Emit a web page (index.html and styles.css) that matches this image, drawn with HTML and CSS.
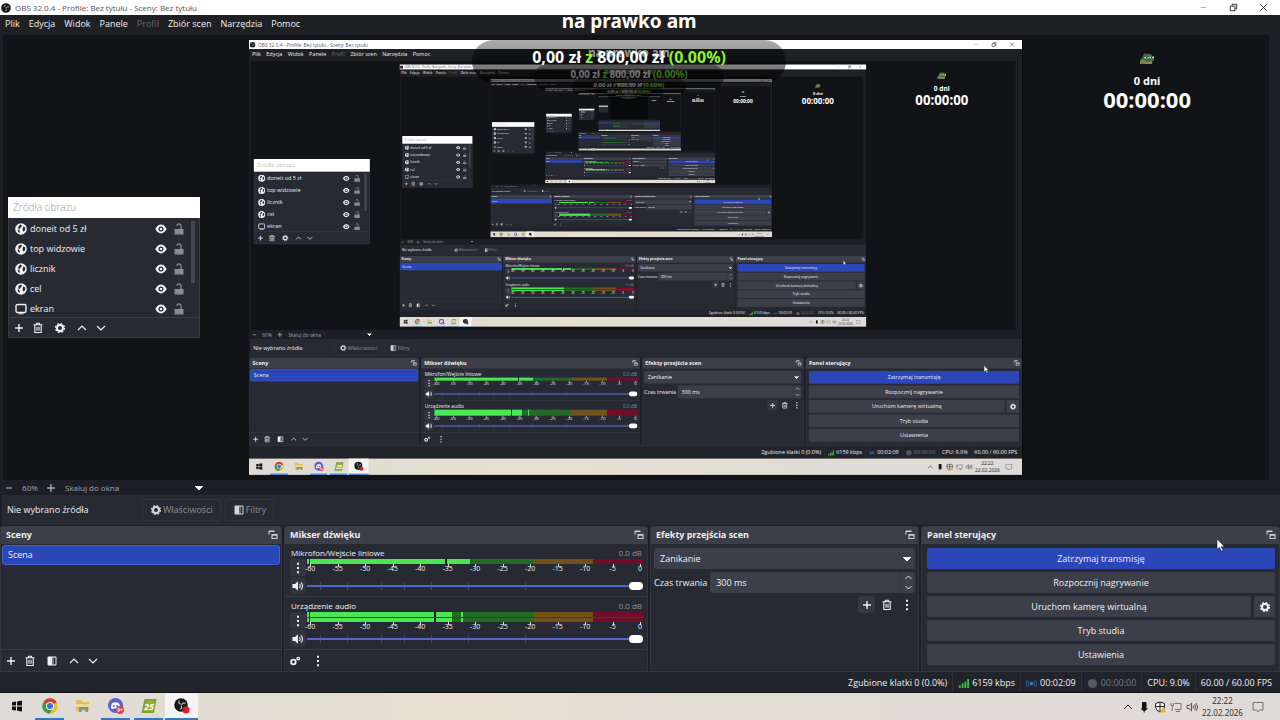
FILE: index.html
```html
<!DOCTYPE html>
<html lang="pl">
<head>
<meta charset="utf-8">
<meta name="viewport" content="width=device-width, initial-scale=1">
<title>OBS 32.0.4 - Profile: Bez tytułu - Sceny: Bez tytułu</title>
<link rel="stylesheet" href="styles.css">
</head>
<body>
<svg class="sprite" aria-hidden="true">
  <symbol id="plus" viewBox="0 0 12 12"><path d="M6 2v8M2 6h8" stroke="currentColor" stroke-width="1.4" fill="none"/></symbol>
  <symbol id="minus" viewBox="0 0 12 12"><path d="M3 6h6" stroke="currentColor" stroke-width="1.2"/></symbol>
  <symbol id="trash" viewBox="0 0 12 12"><path d="M1.5 2.8h9M4.5 2.5V1.2h3v1.3M2.8 3v7.5h6.4V3M5 4.8v4M7 4.8v4" stroke="currentColor" stroke-width="1.1" fill="none"/></symbol>
  <symbol id="filter" viewBox="0 0 12 12"><path d="M2 2h8v8H2z" fill="none" stroke="currentColor" stroke-width="1"/><path d="M2 2h4v8H2z" fill="currentColor"/><path d="M6 2h2v8H6z" fill="currentColor" opacity=".4"/></symbol>
  <symbol id="up" viewBox="0 0 12 12"><path d="M2 8l4-4 4 4" stroke="currentColor" stroke-width="1.2" fill="none"/></symbol>
  <symbol id="down" viewBox="0 0 12 12"><path d="M2 4l4 4 4-4" stroke="currentColor" stroke-width="1.2" fill="none"/></symbol>
  <symbol id="gear" viewBox="0 0 12 12"><circle cx="6" cy="6" r="3" fill="none" stroke="currentColor" stroke-width="2"/><circle cx="6" cy="6" r="4.4" fill="none" stroke="currentColor" stroke-width="1.4" stroke-dasharray="1.9 1.55"/></symbol>
  <symbol id="gears" viewBox="0 0 12 12"><circle cx="4.4" cy="7" r="2.3" fill="none" stroke="currentColor" stroke-width="1.8"/><circle cx="9.2" cy="3.6" r="1.3" fill="none" stroke="currentColor" stroke-width="1.3"/></symbol>
  <symbol id="dots" viewBox="0 0 12 12"><path d="M5 .8h2v2H5zM5 5h2v2H5zM5 9.2h2v2H5z" fill="currentColor"/></symbol>
  <symbol id="speaker" viewBox="0 0 12 12"><path d="M.5 4H3l3-2.8v9.6L3 8H.5z" fill="currentColor"/><path d="M7.5 4q1.3 2 0 4M9 2.3q3 3.7 0 7.4" fill="none" stroke="currentColor" stroke-width="1.1"/></symbol>
  <symbol id="eye" viewBox="0 0 12 12"><path d="M.3 6Q2.800 1.600 6 1.600T11.700 6Q9.200 10.400 6 10.400T.3 6z" fill="currentColor"/><circle cx="6" cy="6" r="2.500" fill="#272a33"/><circle cx="6" cy="6" r="1.300" fill="currentColor"/></symbol>
  <symbol id="lock" viewBox="0 0 12 12"><path d="M1.500 6h9v5.500h-9z" fill="currentColor"/><path d="M4.200 3V2.400Q4.200 1 6 1t2 1.800V6" fill="none" stroke="currentColor" stroke-width="1.300"/></symbol>
  <symbol id="globe" viewBox="0 0 12 12"><circle cx="6" cy="6" r="5.800" fill="currentColor"/><path d="M5.200 1.600l1.600.6-.3 1.700-1.300.8-.5 1.500-1.500-.8.300-1.800zM8.200 3.600l2.100 1-.3 2.600-1.700 1.500-.8-2.300zM2.600 6.200l2 1 .2 2.700-1.500-1z" fill="#272a33"/></symbol>
  <symbol id="monitor" viewBox="0 0 12 12"><rect x="1" y="1.500" width="10" height="8" rx="1.500" fill="none" stroke="currentColor" stroke-width="1.400"/><path d="M3.500 10.800h5" stroke="currentColor"/></symbol>
  <symbol id="float" viewBox="0 0 12 12"><path d="M2 5.500V2.500h5.500M2 2h5.500M5 5.500h5v4H5zM5 6.300h5" fill="none" stroke="currentColor" stroke-width="1.100"/></symbol>
  <symbol id="obs" viewBox="0 0 12 12"><circle cx="6" cy="6" r="5.800" fill="#17181b"/><path d="M4.600 2.200Q3.400 4.600 5.600 5.400M9.800 4.600Q7.200 3.700 6.600 5.900M5.300 9.700Q7.600 8.300 5.900 6.500" fill="none" stroke="#d8d8d8" stroke-width=".9"/></symbol>
  <symbol id="frog" viewBox="0 0 16 12"><path d="M1 7L3 5q0-2 2-3l3-1q3-.6 5 1.200l2 1.800v3L13 9v2H1z" fill="#3f6b3d"/><path d="M4 2l2-2 1 1-2 2z" fill="#6d5a40"/><path d="M5.500 4h4v1.500h-4zM10.500 3.800H15v1.500h-4.500z" fill="#dfeee0"/><path d="M7 4h1.300v1.500H7zM12 3.800h1.300v1.500H12z" fill="#17301b"/><path d="M1 8.500l3-2 4 2.300 5-.8v3H1z" fill="#7e8f4e"/><path d="M2 9h4v2H2z" fill="#8d6849"/></symbol>
</svg>

<div class="screen">
  <header class="titlebar">
    <svg class="icon"><use href="#obs"/></svg>
    <span class="caption">OBS 32.0.4 - Profile: Bez tytułu - Sceny: Bez tytułu</span>
    <div class="window-buttons">
      <button type="button" aria-label="Minimalizuj"><svg viewBox="0 0 12 12"><path d="M3 6h6" stroke="#aaa"/></svg></button>
      <button type="button" aria-label="Przywróć"><svg viewBox="0 0 12 12"><path d="M2.500 4.500h5v5h-5zM4.500 4V2.500h5v5H8" fill="none" stroke="#222"/></svg></button>
      <button type="button" aria-label="Zamknij"><svg viewBox="0 0 12 12"><path d="M2.500 2.500l7 7M9.500 2.500l-7 7" stroke="#222" stroke-width=".9"/></svg></button>
    </div>
  </header>
  <nav class="menu">
    <button type="button">Plik</button><button type="button">Edycja</button><button type="button">Widok</button><button type="button">Panele</button><button type="button" disabled>Profil</button><button type="button">Zbiór scen</button><button type="button">Narzędzia</button><button type="button">Pomoc</button>
  </nav>

  <main class="preview"><div class="canvas"></div></main>

  <div class="zoombar">
    <button type="button" aria-label="Pomniejsz"><svg class="icon"><use href="#minus"/></svg></button>
    <span class="zoom-value">60%</span>
    <button type="button" aria-label="Powiększ"><svg class="icon"><use href="#plus"/></svg></button>
    <select class="zoom-mode" aria-label="Skalowanie podglądu"><option>Skaluj do okna</option></select>
  </div>

  <div class="context">
    <span class="context-name">Nie wybrano źródła</span>
    <button type="button" disabled><svg class="icon"><use href="#gear"/></svg>Właściwości</button>
    <button type="button" disabled><svg class="icon"><use href="#filter"/></svg>Filtry</button>
  </div>

  <div class="docks">
    <section class="dock">
      <h2>Sceny<svg class="icon"><use href="#float"/></svg></h2>
      <div class="scene-list"><button type="button" class="scene">Scena</button></div>
      <div class="tools">
        <button type="button" aria-label="Dodaj scenę"><svg class="icon"><use href="#plus"/></svg></button>
        <button type="button" aria-label="Usuń scenę"><svg class="icon"><use href="#trash"/></svg></button>
        <button type="button" class="spaced" aria-label="Filtry sceny"><svg class="icon"><use href="#filter"/></svg></button>
        <button type="button" class="spaced" aria-label="W górę"><svg class="icon"><use href="#up"/></svg></button>
        <button type="button" aria-label="W dół"><svg class="icon"><use href="#down"/></svg></button>
      </div>
    </section>

    <section class="dock">
      <h2>Mikser dźwięku<svg class="icon"><use href="#float"/></svg></h2>
      <div class="channel">
        <div class="channel-head"><span>Mikrofon/Wejście liniowe</span><span class="level">0.0 dB</span></div>
        <button type="button" aria-label="Opcje mikrofonu"><svg class="icon"><use href="#dots"/></svg></button>
        <div class="meter">
          <div class="bar mic"></div>
          <div class="scale"><span>-60</span><span>-55</span><span>-50</span><span>-45</span><span>-40</span><span>-35</span><span>-30</span><span>-25</span><span>-20</span><span>-15</span><span>-10</span><span>-5</span><span>0</span></div>
        </div>
        <button type="button" aria-label="Wycisz mikrofon"><svg class="icon"><use href="#speaker"/></svg></button>
        <input type="range" value="100" aria-label="Głośność mikrofonu">
      </div>
      <div class="channel">
        <div class="channel-head"><span>Urządzenie audio</span><span class="level">0.0 dB</span></div>
        <button type="button" aria-label="Opcje urządzenia"><svg class="icon"><use href="#dots"/></svg></button>
        <div class="meter">
          <div class="bar desktop"></div>
          <div class="scale"><span>-60</span><span>-55</span><span>-50</span><span>-45</span><span>-40</span><span>-35</span><span>-30</span><span>-25</span><span>-20</span><span>-15</span><span>-10</span><span>-5</span><span>0</span></div>
        </div>
        <button type="button" aria-label="Wycisz urządzenie"><svg class="icon"><use href="#speaker"/></svg></button>
        <input type="range" value="100" aria-label="Głośność urządzenia">
      </div>
      <div class="tools mixer-tools">
        <button type="button" aria-label="Zaawansowane"><svg class="icon"><use href="#gears"/></svg></button>
        <button type="button" class="spaced" aria-label="Menu miksera"><svg class="icon"><use href="#dots"/></svg></button>
      </div>
    </section>

    <section class="dock">
      <h2>Efekty przejścia scen<svg class="icon"><use href="#float"/></svg></h2>
      <div class="transitions">
        <select class="effect" aria-label="Efekt przejścia"><option>Zanikanie</option></select>
        <label class="duration"><span>Czas trwania</span>
          <span class="spin"><input type="text" value="300 ms"><span class="arrows"><svg class="icon"><use href="#up"/></svg><svg class="icon"><use href="#down"/></svg></span></span>
        </label>
        <div class="transition-tools">
          <button type="button" class="raised" aria-label="Dodaj przejście"><svg class="icon"><use href="#plus"/></svg></button>
          <button type="button" aria-label="Usuń przejście"><svg class="icon"><use href="#trash"/></svg></button>
          <button type="button" aria-label="Opcje przejścia"><svg class="icon"><use href="#dots"/></svg></button>
        </div>
      </div>
    </section>

    <section class="dock">
      <h2>Panel sterujący<svg class="icon"><use href="#float"/></svg></h2>
      <div class="controls">
        <button type="button" class="active">Zatrzymaj transmisję</button>
        <button type="button">Rozpocznij nagrywanie</button>
        <div class="split"><button type="button">Uruchom kamerę wirtualną</button><button type="button" class="cog" aria-label="Ustawienia kamery"><svg class="icon"><use href="#gear"/></svg></button></div>
        <button type="button">Tryb studia</button>
        <button type="button">Ustawienia</button>
      </div>
    </section>
  </div>

  <footer class="status">
    <span>Zgubione klatki 0 (0.0%)</span>
    <span><svg viewBox="0 0 12 12"><path d="M1 8h2v3H1zM4 6h2v5H4zM7 4h2v7H7zM10 1h2v10h-2z" fill="#35c441"/></svg>6159 kbps</span>
    <span><svg viewBox="0 0 12 12"><circle cx="6" cy="6" r="1.800" fill="#3387cf"/><path d="M3.500 3q-2 3 0 6M8.500 3q2 3 0 6M1.500 2q-2.500 4 0 8M10.500 2q2.500 4 0 8" fill="none" stroke="#28669f"/></svg>00:02:09</span>
    <span class="idle"><svg viewBox="0 0 12 12"><circle cx="6" cy="6" r="5" fill="#555761"/></svg>00:00:00</span>
    <span>CPU: 9.0%</span>
    <span>60.00 / 60.00 FPS</span>
  </footer>

  <div class="taskbar">
    <button type="button" aria-label="Start"><svg viewBox="0 0 16 16"><path d="M3 4.200l4-.6v4H3zM8 3.400l5-.8v5H8zM3 8.600h4v4l-4-.6zM8 8.600h5v5l-5-.8z" fill="#111"/></svg></button>
    <button type="button" class="running" aria-label="Chrome"><svg viewBox="0 0 16 16"><circle cx="8" cy="8" r="7.700" fill="#e9bf31"/><path d="M8 8L1.300 4.200A7.700 7.700 0 0 1 14.700 4.200z" fill="#d54035"/><path d="M8 8L1.300 4.200A7.700 7.700 0 0 0 7.500 15.700L11 10z" fill="#3a9951"/><circle cx="8" cy="8" r="4" fill="#f4f4f4"/><circle cx="8" cy="8" r="3" fill="#3974cf"/></svg></button>
    <button type="button" aria-label="Eksplorator plików"><svg viewBox="0 0 16 16"><path d="M1 2h5l1.500 2H14v9H1z" fill="#e4be58"/><path d="M1 6h13v3H1z" fill="#f2d88b"/><path d="M4 14V9h9v5h-2.500v-2.500h-4V14z" fill="#6598b4"/></svg></button>
    <button type="button" class="running" aria-label="Discord"><svg viewBox="0 0 16 16"><circle cx="7.500" cy="7.500" r="7.500" fill="#5b62cf"/><path d="M3 10.500Q3 6 4.800 4.700q2.700-1 5.400 0Q12 6 12 10.500l-2 .8-.8-1H5.800l-.8 1z" fill="#fff"/><circle cx="5.800" cy="8" r="1" fill="#5b62cf"/><circle cx="9.200" cy="8" r="1" fill="#5b62cf"/><circle cx="12" cy="12" r="4" fill="#d04457"/><text x="12" y="14" class="badge">9+</text></svg></button>
    <button type="button" class="running" aria-label="FS25"><svg viewBox="0 0 16 16"><path d="M3.500 1h12l-2.500 14H.5z" fill="#7e9f32"/><path d="M5 2.500h9L12 13.500H2.500z" fill="#8fb03b"/><text x="8" y="11.500" class="game">25</text></svg></button>
    <button type="button" class="running current" aria-label="OBS Studio"><svg viewBox="0 0 16 16"><use href="#obs" width="14" height="14"/><circle cx="12" cy="12" r="3.500" fill="#df1b28"/></svg></button>
    <div class="tray">
      <svg viewBox="0 0 12 12"><path d="M2 8l4-4 4 4" fill="none" stroke="#333"/></svg>
      <svg viewBox="0 0 12 12"><rect x="4" y="1" width="4.500" height="8" rx="1" fill="#111"/><path d="M3 7.500q3 4 6.500 0M6.200 9.500v2" fill="none" stroke="#111"/></svg>
      <svg viewBox="0 0 12 12"><path d="M6 1l4.500 1.500v4Q10 9.500 6 11 2 9.500 1.500 6.500v-4zM6 1v10M1.500 5.500h9" fill="#f5f2ec" stroke="#222"/><path d="M9 6l3 5.500H6z" fill="#e2b41c"/></svg>
      <svg viewBox="0 0 12 12"><path d="M4.500 2.500H11v6H5M1 2v2.500h2.500V2M2.200 4.500V10M6 10.500h4" fill="none" stroke="#777"/></svg>
      <svg viewBox="0 0 12 12"><path d="M1 4.500h2l2.500-2.300v7.600L3 7.500H1zM7 4.500q1 1.500 0 3M8.600 3.200q1.900 2.800 0 5.600M10.200 2q2.800 4 0 8" fill="none" stroke="#333" stroke-width=".8"/></svg>
      <div class="clock"><span>22:22</span><span>22.02.2026</span></div>
      <svg viewBox="0 0 12 12"><path d="M1 1.500h10v7.500H7.500L6 10.800 4.500 9H1z" fill="none" stroke="#555" stroke-width=".8"/></svg>
    </div>
  </div>

  <aside class="sources">
    <div class="sources-title">Źródła obrazu</div>
    <ul>
      <li><svg class="icon"><use href="#globe"/></svg><span>doneit od 5 zł</span><svg class="icon"><use href="#eye"/></svg><svg class="icon lock"><use href="#lock"/></svg></li>
      <li><svg class="icon"><use href="#globe"/></svg><span>top widzowie</span><svg class="icon"><use href="#eye"/></svg><svg class="icon lock"><use href="#lock"/></svg></li>
      <li><svg class="icon"><use href="#globe"/></svg><span>licznik</span><svg class="icon"><use href="#eye"/></svg><svg class="icon lock"><use href="#lock"/></svg></li>
      <li><svg class="icon"><use href="#globe"/></svg><span>cel</span><svg class="icon"><use href="#eye"/></svg><svg class="icon lock"><use href="#lock"/></svg></li>
      <li><svg class="icon"><use href="#monitor"/></svg><span>ekran</span><svg class="icon"><use href="#eye"/></svg><svg class="icon lock"><use href="#lock"/></svg></li>
    </ul>
    <div class="tools">
      <button type="button" aria-label="Dodaj źródło"><svg class="icon"><use href="#plus"/></svg></button>
      <button type="button" aria-label="Usuń źródło"><svg class="icon"><use href="#trash"/></svg></button>
      <button type="button" class="spaced" aria-label="Właściwości źródła"><svg class="icon"><use href="#gear"/></svg></button>
      <button type="button" class="spaced" aria-label="W górę"><svg class="icon"><use href="#up"/></svg></button>
      <button type="button" aria-label="W dół"><svg class="icon"><use href="#down"/></svg></button>
    </div>
  </aside>

  <div class="goal">
    <div class="goal-name">na prawko am</div>
    <div class="goal-pill">0,00 zł <b>z</b> 800,00 zł <em>(0.00%)</em></div>
  </div>
  <div class="countdown">
    <svg viewBox="0 0 16 12"><use href="#frog"/></svg>
    <span class="days">0 dni</span>
    <span class="time">00:00:00</span>
  </div>
  <svg class="pointer" viewBox="0 0 9 14"><path d="M1 1v10.500l2.500-2.300 1.800 4 1.700-.8-1.700-3.700H8.500z" fill="#fff" stroke="#222" stroke-width=".6"/></svg>
</div>
<script src="preview.js"></script>
</body>
</html>
```
FILE: preview.js
```js
// The preview shows the captured desktop, which contains the preview itself.
const DEPTH = 6;
const screenNode = document.querySelector('.screen');
const blank = screenNode.cloneNode(true);
blank.inert = true;
blank.setAttribute('aria-hidden', 'true');
let inner = null;
for (let i = 0; i < DEPTH; i += 1) {
  const copy = blank.cloneNode(true);
  if (inner) copy.querySelector('.canvas').append(inner);
  inner = copy;
}
screenNode.querySelector('.canvas').append(inner);
```
FILE: styles.css
```css
:root {
  --panel: #272a33;
  --raised: #3c3e4a;
  --dark: #1e1f26;
  --blue: #2b46b6;
  --text: #f0f0f3;
  --muted: #8d8f98;
}
* { box-sizing: border-box; }
body {
  margin: 0;
  overflow: hidden;
  background: #121317;
  font-family: "Open Sans", "Noto Sans", sans-serif;
  font-size: 9px;
  line-height: 14px;
  color: var(--text);
}
button, input, select {
  margin: 0;
  padding: 0;
  border: 0;
  background: none;
  color: inherit;
  font: inherit;
}
.sprite { position: absolute; width: 0; height: 0; }
.icon { width: 12px; height: 12px; flex: none; display: block; }

.screen {
  position: relative;
  display: flex;
  flex-direction: column;
  width: 100vw;
  height: 100vh;
  overflow: hidden;
  background: var(--dark);
}

.titlebar {
  display: flex;
  align-items: center;
  gap: 4px;
  height: 15px;
  padding-left: 1px;
  background: #fff;
  color: #55565a;
}
.titlebar .icon { width: 10px; height: 10px; }
.caption { flex: 1; font-size: 8px; }
.window-buttons { display: flex; padding-right: 2px; }
.window-buttons button { width: 30px; height: 14px; display: grid; place-items: center; }
.window-buttons svg { width: 11px; height: 11px; }

.menu {
  display: flex;
  align-items: center;
  gap: 9px;
  height: 18px;
  padding: 0 5px;
  background: #1f2024;
}
.menu button:disabled { color: #66676d; }

.preview {
  flex: 1;
  min-height: 0;
  display: grid;
  place-items: center;
  overflow: hidden;
  margin-right: 8px;
  border: 0 solid #1e1f24;
  border-width: 2px 3px 0;
  background: #121317;
}
.canvas { width: 60.4vw; height: 60.4vh; overflow: hidden; background: #08090b; }
.canvas > .screen { transform: scale(.604); transform-origin: 0 0; }

.zoombar {
  display: flex;
  align-items: center;
  gap: 4px;
  height: 15px;
  padding: 0 3px;
  color: #a5a6ac;
  font-size: 8px;
}
.zoom-value { width: 22px; text-align: center; }
.zoom-mode, .effect {
  appearance: none;
  background-image: conic-gradient(from -45deg at 50% 100%, #fff 90deg, transparent 0);
  background-repeat: no-repeat;
  background-size: 8px 4px;
  background-position: right 4px center;
}
.zoom-mode { width: 142px; margin-left: 4px; }

.context {
  display: flex;
  align-items: center;
  gap: 4px;
  height: 30px;
  margin-left: 2px;
  padding-left: 5px;
  background: var(--panel);
}
.context-name { width: 131px; }
.context button {
  display: flex;
  align-items: center;
  gap: 1px;
  height: 22px;
  padding: 0 7px;
  border: 1px solid #31343e;
  border-radius: 2px;
  color: var(--muted);
}
.context .icon { color: #d5d6da; }

.docks {
  display: grid;
  grid-template-columns: 282fr 364fr 269fr 359fr;
  gap: 2px;
  height: 146px;
  padding-top: 1px;
}
.dock {
  display: flex;
  flex-direction: column;
  min-width: 0;
  background: var(--panel);
  border: 1px solid #33353f;
  border-top: 0;
  border-radius: 3px;
}
.dock h2 {
  display: flex;
  align-items: center;
  justify-content: space-between;
  height: 18px;
  margin: 0;
  padding: 0 2px 0 5px;
  background: var(--raised);
  border-radius: 3px 3px 0 0;
  font-size: 9px;
  font-weight: 700;
}
.dock h2 .icon { color: #cfd0d5; }
.scene-list { flex: 1; padding: 1px; }
.scene {
  display: block;
  width: 100%;
  height: 20px;
  padding: 0 5px;
  border: 1px solid #3f61d5;
  border-radius: 3px;
  background: var(--blue);
  text-align: left;
}
.tools {
  display: flex;
  align-items: center;
  height: 22px;
  border-top: 1px solid #3a3c47;
}
.tools button { width: 19px; height: 18px; display: grid; place-items: center; }
.tools .spaced { margin-left: 3px; }

.channel {
  display: grid;
  grid-template-columns: 16px 1fr;
  grid-template-rows: 13px 18px 18px;
  column-gap: 1px;
  padding: 2px 4px 1px 5px;
}
.channel + .channel { border-top: 1px solid #3a3c47; }
.channel-head { grid-column: 1 / 3; display: flex; justify-content: space-between; padding: 0 1px; font-size: 8px; line-height: 13px; }
.level { color: var(--muted); }
.channel button { height: 17px; display: grid; place-items: center; border-radius: 3px; background: #32343e; }
.bar { height: 5px; }
.mic { background: linear-gradient(90deg, #4be653 0 .6%, #111 .6% .9%, #4be653 .9% 41.2%, #111 41.2% 41.8%, #4be653 41.8% 48.5%, #236b25 48.5% 67.3%, #70521a 67.3% 85.1%, #700d2a 85.1%); }
.desktop {
  height: 10px;
  background: linear-gradient(transparent 5px, #1d5522 5px 6px, transparent 6px), linear-gradient(90deg, #4be653 0 .6%, #111 .6% .9%, #4be653 .9% 37.8%, #111 37.8% 38.4%, #4be653 38.4% 43.2%, #236b25 43.2% 45.9%, #4be653 45.9% 46.5%, #236b25 46.5% 67.3%, #70521a 67.3% 85.1%, #700d2a 85.1%);
}
.scale { display: flex; justify-content: space-between; font-size: 7px; line-height: 9px; }
.scale span { position: relative; display: flex; justify-content: center; width: 6px; }
.scale span::before { content: ""; position: absolute; top: 0; left: 3px; width: 1px; height: 3px; background: #dedfe3; }
input[type="range"] {
  appearance: none;
  width: 100%;
  height: 17px;
  background:
    linear-gradient(#5268c6, #5268c6) 0 50% / 100% 2px no-repeat,
    linear-gradient(#454857, #454857) 4% 50% / 1px 8px no-repeat,
    linear-gradient(#454857, #454857) 12% 50% / 1px 8px no-repeat,
    linear-gradient(#454857, #454857) 22% 50% / 1px 8px no-repeat,
    linear-gradient(#454857, #454857) 29% 50% / 1px 8px no-repeat,
    linear-gradient(#454857, #454857) 37% 50% / 1px 8px no-repeat,
    linear-gradient(#454857, #454857) 48% 50% / 1px 8px no-repeat,
    linear-gradient(#454857, #454857) 65% 50% / 1px 8px no-repeat;
}
input[type="range"]::-webkit-slider-thumb { appearance: none; width: 14px; height: 8px; border-radius: 4px; background: #fff; }
.mixer-tools .spaced { margin-left: 4px; }

.transitions { display: flex; flex-direction: column; gap: 3px; padding: 4px 3px; }
.effect {
  height: 21px;
  padding: 0 6px;
  border-radius: 3px;
  background-color: var(--raised);
}
.duration { display: flex; align-items: center; gap: 3px; }
.spin { flex: 1; display: flex; height: 21px; padding-left: 6px; border-radius: 3px; background: var(--raised); }
.spin input { flex: 1; min-width: 0; }
.arrows { display: flex; flex-direction: column; width: 15px; align-items: center; justify-content: space-around; border-left: 1px solid #33353f; }
.arrows .icon { width: 9px; height: 9px; }
.transition-tools { display: flex; justify-content: flex-end; gap: 3px; }
.transition-tools button { width: 17px; height: 17px; display: grid; place-items: center; border-radius: 3px; }
.transition-tools .raised { background: #353741; }

.controls { display: flex; flex-direction: column; gap: 3px; padding: 4px 4px 4px 5px; }
.controls button { height: 21px; border-radius: 2px; background: var(--raised); }
.controls .active { background: var(--blue); }
.split { display: flex; gap: 3px; }
.split button { flex: 1; }
.split .cog { flex: none; width: 21px; display: grid; place-items: center; }

.status {
  display: flex;
  justify-content: flex-end;
  align-items: stretch;
  height: 22px;
  padding-right: 3px;
  border-top: 1px solid #353741;
  border-bottom: 1px solid #111216;
  background: #22242c;
}
.status span { display: flex; align-items: center; gap: 3px; padding: 2px 5px 0; border-right: 1px solid #2f313a; }
.status span:last-child { border-right: 0; }
.status svg { width: 11px; height: 11px; }
.idle { color: #777983; }

.taskbar {
  display: flex;
  height: 27px;
  background: linear-gradient(90deg, #dedbd7 0, #e2dcd2 16%, #e8dfd2 35%, #e2dcd6 75%, #dedad8);
  color: #333;
}
.taskbar button { width: 33px; display: grid; place-items: center; border-bottom: 2px solid transparent; }
.taskbar button svg { width: 16px; height: 16px; }
.taskbar .running { border-image: linear-gradient(90deg, transparent 12%, #3676bb 12% 88%, transparent 88%) 2; }
.taskbar .current { background: #f5f3f1; border-image: none; border-color: #3676bb; }
.badge { font-size: 5px; font-weight: 600; fill: #fff; text-anchor: middle; }
.game { font-size: 9px; font-weight: 700; font-style: italic; fill: #fff; text-anchor: middle; }
.tray { display: flex; align-items: center; gap: 4px; margin-left: auto; padding-right: 16px; }
.tray > svg { width: 12px; height: 12px; }
.clock { display: flex; flex-direction: column; align-items: center; width: 41px; margin-right: 5px; font-family: "Noto Sans", sans-serif; font-size: 8px; line-height: 12px; white-space: nowrap; }

.sources {
  position: absolute;
  left: 8px;
  top: 197px;
  width: 192px;
  background: var(--panel);
  border: 1px solid #3b3d46;
  border-top: 0;
}
.sources-title { height: 21px; margin: 0 -1px; padding: 0 5px; background: #fff; color: #9b9b9b; font-size: 10px; font-weight: 300; line-height: 20px; }
.sources ul { height: 99px; margin: 0; padding: 1px 14px 0 6px; list-style: none; background: linear-gradient(#454750, #454750) right 4px top 3px / 4px 62px no-repeat; }
.sources li { display: flex; align-items: center; gap: 6px; height: 20px; }
.sources li span { flex: 1; margin-left: -3px; }
.sources .lock { color: #8a8b90; }
.sources .tools { height: 20px; }

.goal {
  position: absolute;
  left: 36.9%;
  top: 10px;
  width: 24.5%;
  text-align: center;
  color: #fff;
  font-family: "Noto Sans", sans-serif;
  font-weight: 700;
}
.goal-name { height: 30px; font-size: 19px; line-height: 22px; }
.goal-pill {
  height: 43px;
  padding-top: 4px;
  border-radius: 22px;
  background: linear-gradient(rgba(0, 0, 0, .32), rgba(0, 0, 0, .62));
  font-size: 16px;
  line-height: 26px;
  white-space: nowrap;
}
.goal-pill b, .goal-pill em { color: #8cf531; font-style: normal; font-weight: 700; }
.countdown {
  position: absolute;
  right: 89px;
  top: 52px;
  display: flex;
  flex-direction: column;
  align-items: center;
  color: #fff;
  font-family: "Noto Sans", sans-serif;
  font-weight: 700;
}
.countdown svg { width: 16px; height: 14px; }
.days { margin-top: 7px; font-size: 11px; line-height: 15px; }
.time { font-size: 22px; line-height: 22px; }
.pointer { position: absolute; left: 95%; top: 538px; width: 9px; height: 14px; }
```
